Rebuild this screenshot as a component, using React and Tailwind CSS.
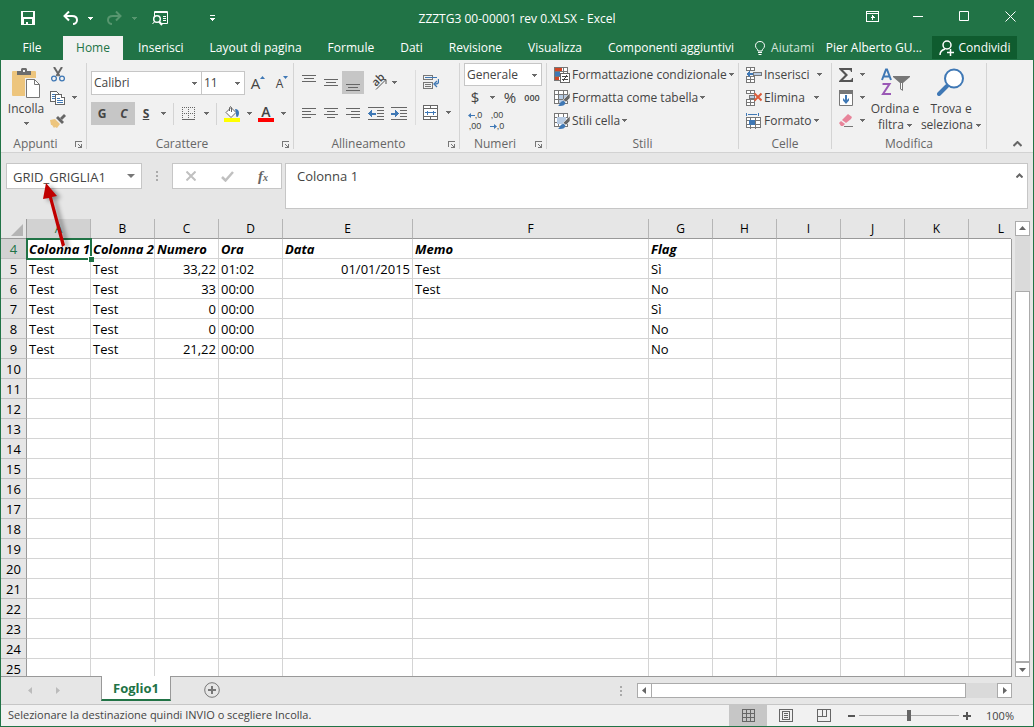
import React, { useState } from "react";

const columns = ["A", "B", "C", "D", "E", "F", "G", "H", "I", "J", "K", "L"];
const rowNumbers = Array.from({ length: 22 }, (_, i) => i + 4);
const rightAligned = ["C", "E"];

const sheet = {
    4: { A: "Colonna 1", B: "Colonna 2", C: "Numero", D: "Ora", E: "Data", F: "Memo", G: "Flag" },
    5: { A: "Test", B: "Test", C: "33,22", D: "01:02", E: "01/01/2015", F: "Test", G: "Sì" },
    6: { A: "Test", B: "Test", C: "33", D: "00:00", F: "Test", G: "No" },
    7: { A: "Test", B: "Test", C: "0", D: "00:00", G: "Sì" },
    8: { A: "Test", B: "Test", C: "0", D: "00:00", G: "No" },
    9: { A: "Test", B: "Test", C: "21,22", D: "00:00", G: "No" },
};

const tabs = ["Inserisci", "Layout di pagina", "Formule", "Dati", "Revisione", "Visualizza", "Componenti aggiuntivi"];

const Caret = ({ className = "" }) => (
    <svg className={"shrink-0 " + className} width="5" height="3" viewBox="0 0 5 3" fill="currentColor" shapeRendering="crispEdges">
        <path d="M0 0h5v1H4v1H3v1H2V2H1V1H0z" />
    </svg>
);

const CaretButton = ({ label, className = "" }) => (
    <button type="button" aria-label={label} className={"flex h-[23px] w-3 shrink-0 items-center justify-center text-[#6a6a6a] " + className}>
        <Caret />
    </button>
);

const Tool = ({ label, className = "w-[22px]", children }) => (
    <button type="button" aria-label={label} title={label} className={"flex h-[23px] shrink-0 items-center justify-center " + className}>
        {children}
    </button>
);

const Group = ({ label, launcher, className = "", children }) => (
    <section aria-label={label} className={"relative flex h-[86px] shrink-0 flex-col border-r border-[#d4d4d4] " + className}>
        <div className="flex h-[73px] shrink-0">{children}</div>
        <div className={"h-[13px] shrink-0 text-center leading-4 text-[#666] " + (launcher ? "pr-4" : "")}>{label}</div>
        {launcher && (
            <button type="button" aria-label={"Opzioni " + label} className="absolute right-[4px] bottom-[1px] text-[#777]">
                <svg width="7" height="7" viewBox="0 0 7 7" fill="none" stroke="currentColor" shapeRendering="crispEdges">
                    <path d="M0.500 6V0.500H6.500M3 3l3 3M6.500 3v3.500H3" />
                </svg>
            </button>
        )}
    </section>
);

const Lines = ({ d, blue, w = 16 }) => (
    <svg width={w} height="16" viewBox={"0 0 " + w + " 16"} fill="none" stroke="#666" shapeRendering="crispEdges">
        <path d={d} />
        {blue && <path d={blue} fill="#3f78b5" stroke="none" />}
    </svg>
);

const Select = ({ label, value, className }) => (
    <div className={"relative shrink-0 border border-[#c6c6c6] bg-white " + className}>
        <select aria-label={label} defaultValue={value} className="block h-full w-full appearance-none bg-transparent px-[2px] text-[#444] outline-none">
            <option>{value}</option>
        </select>
        <Caret className="pointer-events-none absolute top-[10px] right-1 text-[#6a6a6a]" />
    </div>
);

const PasteIcon = () => (
    <svg width="28" height="30" viewBox="0 0 28 30">
        <rect x="0" y="3" width="24" height="25" rx="1" fill="#edc57d" />
        <path d="M5 7V3h4V1l1-1h4l1 1v2h4v4z" fill="#6d6d6d" />
        <rect x="11" y="2" width="2" height="2" fill="#f1f1f1" />
        <path d="M13 10h11v18H13z" fill="#f1f1f1" />
        <path d="M14.500 11.500h8l5 5v13h-13z" fill="#fff" stroke="#777" />
        <path d="M22.500 11.500v5h5" fill="none" stroke="#777" />
    </svg>
);

const CutIcon = () => (
    <svg width="14" height="15" viewBox="0 0 14 15" fill="none">
        <path d="M3 0l5.500 9M11 0L5.500 9" stroke="#666" strokeWidth="2" />
        <circle cx="3" cy="11.500" r="2.400" stroke="#3f78b5" strokeWidth="1.300" />
        <circle cx="11" cy="11.500" r="2.400" stroke="#3f78b5" strokeWidth="1.300" />
    </svg>
);

const CopyIcon = () => (
    <svg width="16" height="14" viewBox="0 0 16 14" fill="#fff" stroke="#666" shapeRendering="crispEdges">
        <path d="M0.500 0.500h6l2 2v8h-8z" />
        <path d="M2 3.500h3M2 5.500h3M2 7.500h3" stroke="#3f78b5" />
        <path d="M5.500 3.500h6l3 3v7h-9z" />
        <path d="M11.500 3.500v3h3" />
        <path d="M7 7.500h3M7 9.500h6M7 11.500h6" stroke="#3f78b5" />
    </svg>
);

const BrushIcon = () => (
    <svg width="16" height="14" viewBox="0 0 16 14">
        <path d="M0 6l5-1 5 5-3 4-2-1-1 1-2-3-1 0z" fill="#edc57d" />
        <path d="M6 4l2-2 6 6-2 2z" fill="#666" />
        <path d="M10 4l4-4 2 2-4 4z" fill="#666" />
    </svg>
);

const BordersIcon = () => (
    <svg width="14" height="14" viewBox="0 0 14 14" stroke="#666" shapeRendering="crispEdges">
        <path d="M0 0.500h13M0 6.500h13M0.500 0v13M6.500 0v13M12.500 0v13" strokeDasharray="1 1" />
        <path d="M0 12.500h13" />
    </svg>
);

const FillIcon = () => (
    <svg width="16" height="16" viewBox="0 0 16 16">
        <path d="M2 6.500l5-5 5 5-5 5z" fill="#fff" stroke="#666" />
        <path d="M5.500 5V1.500q1-2 2 0V6" fill="none" stroke="#666" />
        <path d="M11 3c3 0 4 2 4 4s-1 4-2 4-1-2-1-4z" fill="#3f78b5" />
        <rect x="0" y="12" width="16" height="4" fill="#ff0" />
    </svg>
);

const StyleRowIcon = ({ kind }) => (
    <svg width="16" height="16" viewBox="0 0 16 16" shapeRendering="crispEdges">
        <path d="M0.500 0.500h13v13h-13zM0.500 4.500h13M0.500 9.500h13M4.500 0.500v13M9.500 0.500v13" fill="#fff" stroke="#777" />
        {kind === "cond" && (
            <>
                <path d="M1 1h7v3H1zM1 10h4v3H1z" fill="#d24726" />
                <path d="M1 5h5v4H1z" fill="#3f78b5" />
                <path d="M6.500 6.500h9v9h-9z" fill="#fff" stroke="#666" />
                <path d="M8 9.500h6M8 12.500h6M12.500 8l-3 6" stroke="#444" />
            </>
        )}
        {kind === "table" && <path d="M5 5h4v4H5zM10 5h3v4h-3zM5 10h4v3H5z" fill="#b7cbe3" />}
        {kind === "cell" && <path d="M3 4h9v7H3z" fill="#b7cbe3" />}
        {kind !== "cond" && (
            <g shapeRendering="auto">
                <path d="M16 3v5l-4 4-3-2z" fill="#666" stroke="#f1f1f1" strokeWidth="0.600" />
                <path d="M4 16c2-1 2-5 5-5 2 0 3 2 2 3-1 2-4 2-7 2z" fill="#3f78b5" />
            </g>
        )}
    </svg>
);

const CellIcon = ({ kind }) => (
    <svg width="16" height="16" viewBox="0 0 16 16" fill="none" stroke="#777" shapeRendering="crispEdges">
        {kind === "format" ? (
            <>
                <path d="M0.500 4.500h14v10h-14zM0.500 7.500h14M0.500 11.500h14M4.500 4.500v11M9.500 4.500v11" fill="#fff" />
                <path d="M3 7h6v5H3z" fill="#3f78b5" stroke="none" />
                <path d="M0.500 0v3M12.500 0v3M2 1.500h9" stroke="#3f78b5" />
            </>
        ) : (
            <path d="M0.500 0.500h8v3h-8zM4.500 0.500v3M0.500 9.500h8v6h-8zM4.500 9.500v6M0.500 12.500h8" fill="#fff" />
        )}
        {kind === "insert" && (
            <>
                <path d="M7.500 5.500h8v3h-8z" fill="#b7cbe3" />
                <path d="M0 7l4-3v2h3v2H4v2z" fill="#3f78b5" stroke="none" />
            </>
        )}
        {kind === "delete" && (
            <>
                <path d="M3.500 5.500h5v3h-5z" fill="#b7cbe3" />
                <path d="M8.500 3.500l7 7M15.500 3.500l-7 7" stroke="#dc5c3a" strokeWidth="2" shapeRendering="auto" />
            </>
        )}
    </svg>
);

const SigmaIcon = () => (
    <svg width="16" height="16" viewBox="0 0 16 16">
        <path d="M1 1h13v4h-1q0-2-2-2H5l5 5-5 5h7q2 0 2-2h1v4H1v-1l6-6-6-6z" fill="#555" />
    </svg>
);

const FillDownIcon = () => (
    <svg width="14" height="16" viewBox="0 0 14 16">
        <path d="M0.500 1.500h13v14h-13z" fill="#fff" stroke="#777" />
        <path d="M0 0h14v4H0z" fill="#777" />
        <path d="M6 5h2v5l2-2v2.500l-3 3.500-3-3.500V8l2 2z" fill="#3f78b5" />
    </svg>
);

const EraserIcon = () => (
    <svg width="14" height="14" viewBox="0 0 14 14">
        <path d="M9 0l4 3-1 2-5 4-4-3z" fill="#e8849a" />
        <path d="M2 7l4 3-2 2H2L0 9z" fill="#e8849a" />
        <path d="M5 12.500h9" stroke="#777" />
    </svg>
);

const SortIcon = () => (
    <svg width="29" height="28" viewBox="0 0 29 28" fill="none">
        <path d="M1 12L5 1.500h1L10 12M2.500 8.500h6" stroke="#3f78b5" strokeWidth="2" />
        <path d="M1.500 16h7L2 26h8" stroke="#9b59b6" strokeWidth="2" />
        <path d="M12 8h17v1l-7 6v8l-3-2v-6l-7-6z" fill="#777" />
        <path d="M20.500 15v6" stroke="#fff" />
    </svg>
);

const FindIcon = () => (
    <svg width="28" height="28" viewBox="0 0 28 28" fill="none" stroke="#3f78b5">
        <path d="M2 26l8-8" strokeWidth="4" strokeLinecap="round" />
        <circle cx="17" cy="10.500" r="9" fill="#fff" strokeWidth="2" />
    </svg>
);

const TitleBar = () => (
    <header className="grid h-9 shrink-0 grid-cols-[1fr_auto_1fr] items-center text-white">
        <div className="flex pl-[7px]">
            <Tool label="Salva" className="w-10">
                <svg width="14" height="14" viewBox="0 0 14 14" fill="currentColor" shapeRendering="crispEdges">
                    <path fillRule="evenodd" d="M0 0h14v14H0zM2 1v5h10V1zM3 8v5h2v-2h2v2h4V8z" />
                </svg>
            </Tool>
            <Tool label="Annulla" className="ml-2 w-7">
                <svg width="15" height="14" viewBox="0 0 15 14" fill="none" stroke="currentColor" strokeWidth="2">
                    <path d="M6 0.500L1.500 5 6 9.500M2 5h7c3 0 5 1.500 5 4s-2 4-4 4" />
                </svg>
            </Tool>
            <CaretButton label="Elenco annulla" className="text-white" />
            <Tool label="Ripeti" className="ml-1 w-7 text-[#57966f]">
                <svg width="15" height="14" viewBox="0 0 15 14" fill="none" stroke="currentColor" strokeWidth="2">
                    <path d="M9 0.500L13.500 5 9 9.500M13 5H6c-3 0-5 1.500-5 4s2 4 4 4" />
                </svg>
            </Tool>
            <CaretButton label="Elenco ripeti" className="text-[#57966f]" />
            <Tool label="Anteprima di stampa" className="ml-1 w-8">
                <svg width="16" height="15" viewBox="0 0 16 15" fill="none" stroke="currentColor">
                    <path d="M2.500 5V0.500h13v12H10M2 1.500h14M11 5.500h3M11 7.500h3M11 9.500h3" />
                    <circle cx="5" cy="8" r="3.300" strokeWidth="1.500" />
                    <path d="M7 10.500l3 3.500" strokeWidth="2" />
                    <path d="M3 10l-2.500 3" />
                </svg>
            </Tool>
            <Tool label="Personalizza barra di accesso rapido" className="ml-6 w-6">
                <svg width="5" height="6" viewBox="0 0 5 6" fill="currentColor" shapeRendering="crispEdges">
                    <path d="M0 0h5v1H0zM0 3h5v1H4v1H3v1H2V5H1V4H0z" />
                </svg>
            </Tool>
        </div>
        <h1 className="pt-[2px]">ZZZTG3 00-00001 rev 0.XLSX - Excel</h1>
        <div className="flex justify-end pb-1">
            <Tool label="Opzioni barra multifunzione" className="w-[46px]">
                <svg width="13" height="11" viewBox="0 0 13 11" fill="none" stroke="currentColor" shapeRendering="crispEdges">
                    <path d="M0.500 0.500h12v10h-12zM0 2.500h13M6.500 4v5M4.500 6.500h4M5.500 5.500h2" />
                </svg>
            </Tool>
            <Tool label="Riduci a icona" className="w-[46px]">
                <svg width="10" height="1" viewBox="0 0 10 1"><path d="M0 0h10v1H0z" fill="currentColor" /></svg>
            </Tool>
            <Tool label="Ingrandisci" className="w-[46px]">
                <svg width="10" height="10" viewBox="0 0 10 10"><path d="M0.500 0.500h9v9h-9z" fill="none" stroke="currentColor" /></svg>
            </Tool>
            <Tool label="Chiudi" className="w-[46px]">
                <svg width="11" height="11" viewBox="0 0 11 11"><path d="M0.500 0.500l10 10M10.500 0.500l-10 10" stroke="currentColor" /></svg>
            </Tool>
        </div>
    </header>
);

const TabBar = () => (
    <nav aria-label="Schede" className="flex h-6 shrink-0 items-stretch whitespace-nowrap text-white">
        <button type="button" className="w-[62px]">File</button>
        <button type="button" className="w-[60px] bg-[#f1f1f1] text-[#217346]">Home</button>
        <div className="flex pl-[2px]">
            {tabs.map((tab) => (
                <button key={tab} type="button" className="px-[13px]">{tab}</button>
            ))}
        </div>
        <button type="button" className="ml-2 flex items-center gap-[6px] text-[#d3e3da]">
            <svg width="10" height="14" viewBox="0 0 10 14" fill="none" stroke="#fff">
                <path d="M3 10c0-2-2.500-2.500-2.500-5.200C0.500 2 2.500 0.500 5 0.500s4.500 1.500 4.500 4.300C9.500 7.500 7 8 7 10zM3 11.500h4M3.500 13.500h3" />
            </svg>
            Aiutami
        </button>
        <button type="button" className="ml-auto pr-[10px]">Pier Alberto GU...</button>
        <button type="button" className="mr-4 mb-px flex w-[85px] items-center justify-center gap-1 bg-[#0f5c2f]">
            <svg width="16" height="16" viewBox="0 0 16 16" fill="none" stroke="currentColor" strokeWidth="1.500">
                <circle cx="8" cy="5" r="4" />
                <path d="M1 15c0-3 2-5 5-6M8 12.500h7M11.500 9v7" />
            </svg>
            Condividi
        </button>
    </nav>
);

const Ribbon = () => (
    <div className="flex h-[93px] shrink-0 border-b border-[#d2d2d2] bg-[#f1f1f1] pt-[3px] whitespace-nowrap text-[#444]">
        <Group label="Appunti" launcher className="w-[86px]">
            <button type="button" className="flex w-[49px] shrink-0 flex-col items-center pt-[5px] pl-px leading-4">
                <PasteIcon />
                <span className="pt-[3px]">Incolla</span>
                <Caret className="mt-[5px] text-[#6a6a6a]" />
            </button>
            <div className="flex flex-col">
                <Tool label="Taglia" className="w-4"><CutIcon /></Tool>
                <div className="flex">
                    <Tool label="Copia" className="w-4"><CopyIcon /></Tool>
                    <CaretButton label="Opzioni copia" className="ml-[2px]" />
                </div>
                <Tool label="Copia formato" className="w-4"><BrushIcon /></Tool>
            </div>
        </Group>

        <Group label="Carattere" launcher className="w-[207px]">
            <div className="flex flex-col gap-[7px] pt-2 pl-1">
                <div className="flex items-center">
                    <Select label="Tipo di carattere" value="Calibri" className="h-6 w-[111px]" />
                    <Select label="Dimensione carattere" value="11" className="-ml-px h-6 w-[44px]" />
                    <Tool label="Aumenta dimensione" className="w-[26px]">
                        <span className="text-[15px] leading-none">A</span>
                        <svg className="mb-3" width="5" height="3" viewBox="0 0 5 3"><path d="M0 3L2.500 0 5 3z" fill="#3f78b5" /></svg>
                    </Tool>
                    <Tool label="Riduci dimensione" className="w-[22px]">
                        <span className="pt-[2px] text-[12px] leading-none">A</span>
                        <svg className="mb-3" width="5" height="3" viewBox="0 0 5 3"><path d="M0 0h5L2.500 3z" fill="#3f78b5" /></svg>
                    </Tool>
                </div>
                <div className="flex items-center">
                    <Tool label="Grassetto" className="w-[22px] bg-[#c6c6c6] font-bold">G</Tool>
                    <Tool label="Corsivo" className="w-[22px] bg-[#c6c6c6] font-bold italic">C</Tool>
                    <Tool label="Sottolineato" className="w-[22px] font-bold underline">S</Tool>
                    <CaretButton label="Opzioni sottolineato" />
                    <div className="ml-1 h-[22px] w-px bg-[#d4d4d4]" />
                    <Tool label="Bordi" className="ml-1 w-[22px]"><BordersIcon /></Tool>
                    <CaretButton label="Opzioni bordi" />
                    <div className="ml-1 h-[22px] w-px bg-[#d4d4d4]" />
                    <Tool label="Colore riempimento" className="ml-1 w-[22px]"><FillIcon /></Tool>
                    <CaretButton label="Opzioni riempimento" />
                    <Tool label="Colore carattere" className="w-[22px] flex-col">
                        <span className="text-[14px] leading-[12px] font-semibold">A</span>
                        <span className="h-1 w-4 bg-[#f00]" />
                    </Tool>
                    <CaretButton label="Opzioni colore carattere" />
                </div>
            </div>
        </Group>

        <Group label="Allineamento" launcher className="w-[166px]">
            <div className="mt-[7px] flex h-[55px] w-[122px] flex-col gap-2 border-r border-[#dcdcdc] pt-px pl-1">
                <div className="flex">
                    <Tool label="Allinea in alto"><Lines d="M1 0.500h14M3 3.500h10M1 6.500h14" /></Tool>
                    <Tool label="Allinea al centro"><Lines d="M1 4.500h14M3 7.500h10M1 10.500h14" /></Tool>
                    <Tool label="Allinea in basso" className="w-[22px] bg-[#c6c6c6]"><Lines d="M1 9.500h14M3 12.500h10M1 15.500h14" /></Tool>
                    <Tool label="Orientamento" className="w-6">
                        <svg width="24" height="23" viewBox="0 0 24 23" fill="none" stroke="#555">
                            <text x="12" y="16" transform="rotate(-45 12 16)" fill="#444" stroke="none" fontSize="11" fontWeight="600">ab</text>
                            <path d="M12 18.500L21.500 9M17.500 8.500h4.500v4.500" />
                        </svg>
                    </Tool>
                    <CaretButton label="Opzioni orientamento" />
                </div>
                <div className="flex">
                    <Tool label="Allinea a sinistra"><Lines d="M1 2.500h14M1 5.500h9M1 8.500h14M1 11.500h9" /></Tool>
                    <Tool label="Centra"><Lines d="M1 2.500h14M4 5.500h8M1 8.500h14M4 11.500h8" /></Tool>
                    <Tool label="Allinea a destra"><Lines d="M1 2.500h14M6 5.500h9M1 8.500h14M6 11.500h9" /></Tool>
                    <Tool label="Riduci rientro" className="w-6">
                        <Lines d="M0 1.500h16M9 4.500h7M9 7.500h7M9 10.500h7M0 13.500h16" blue="M0 7.500l4-3.500v2.500h4v2H4V11z" />
                    </Tool>
                    <Tool label="Aumenta rientro" className="w-[22px]">
                        <Lines d="M0 1.500h16M9 4.500h7M9 7.500h7M9 10.500h7M0 13.500h16" blue="M8 7.500L4 4v2.500H0v2h4V11z" />
                    </Tool>
                </div>
            </div>
            <div className="flex flex-col gap-2 pt-[7px] pl-1">
                <Tool label="Testo a capo">
                    <svg width="16" height="16" viewBox="0 0 16 16" fill="none" stroke="#777" shapeRendering="crispEdges">
                        <path d="M0.500 1.500h9v4h-9zM0.500 8.500h9v6h-9zM2 10.500h6M2 12.500h6" />
                        <path d="M2 3.500h12" stroke="#3f78b5" />
                        <path d="M15.500 5v3q0 2-3 2M14 7l-3 3 3 3" stroke="#3f78b5" shapeRendering="auto" strokeWidth="1.300" />
                    </svg>
                </Tool>
                <div className="flex">
                    <Tool label="Unisci e centra">
                        <svg width="16" height="15" viewBox="0 0 16 15" fill="#fff" stroke="#666" shapeRendering="crispEdges">
                            <path d="M0.500 0.500h14v14h-14zM0.500 3.500h14M0.500 11.500h14M7.500 0v3M7.500 12v3" />
                            <path d="M2 7.500h11M4.500 5.500v4M10.500 5.500v4" stroke="#3f78b5" />
                        </svg>
                    </Tool>
                    <CaretButton label="Opzioni unione" />
                </div>
            </div>
        </Group>

        <Group label="Numeri" launcher className="w-[87px]">
            <div className="flex flex-col pl-1">
                <Select label="Formato numero" value="Generale" className="h-[23px] w-[78px]" />
                <div className="flex">
                    <Tool label="Valuta" className="w-[22px] text-[15px]">$</Tool>
                    <CaretButton label="Opzioni valuta" />
                    <Tool label="Percentuale" className="w-6 text-[15px]">%</Tool>
                    <Tool label="Stile separatore" className="w-5 text-[9px] font-semibold">000</Tool>
                </div>
                <div className="flex font-['Liberation_Sans',sans-serif] text-[9px] leading-[11px]">
                    <Tool label="Aumenta decimali" className="w-[22px] flex-col">
                        <span className="flex items-center">
                            <svg width="7" height="5" viewBox="0 0 7 5"><path d="M0 2.500L3 0v2h4v1H3v2z" fill="#3f78b5" /></svg>,0
                        </span>
                        <span>,00</span>
                    </Tool>
                    <Tool label="Diminuisci decimali" className="w-[22px] flex-col">
                        <span>,00</span>
                        <span className="flex items-center">
                            <svg width="7" height="5" viewBox="0 0 7 5"><path d="M7 2.500L4 0v2H0v1h4v2z" fill="#3f78b5" /></svg>,0
                        </span>
                    </Tool>
                </div>
            </div>
        </Group>

        <Group label="Stili" className="w-[192px]">
            <div className="flex flex-col items-start pl-[7px]">
                <button type="button" className="flex h-[23px] items-center gap-[2px]"><StyleRowIcon kind="cond" />Formattazione condizionale<Caret className="text-[#6a6a6a]" /></button>
                <button type="button" className="flex h-[23px] items-center gap-[2px]"><StyleRowIcon kind="table" />Formatta come tabella<Caret className="text-[#6a6a6a]" /></button>
                <button type="button" className="flex h-[23px] items-center gap-[2px]"><StyleRowIcon kind="cell" />Stili cella<Caret className="text-[#6a6a6a]" /></button>
            </div>
        </Group>

        <Group label="Celle" className="w-[93px]">
            <div className="flex flex-col items-start pl-[7px]">
                <div className="flex h-[23px]">
                    <button type="button" className="flex items-center gap-[2px]"><CellIcon kind="insert" />Inserisci</button>
                    <CaretButton label="Opzioni inserisci" className="ml-1" />
                </div>
                <div className="flex h-[23px]">
                    <button type="button" className="flex items-center gap-[2px]"><CellIcon kind="delete" />Elimina</button>
                    <CaretButton label="Opzioni elimina" className="ml-[6px]" />
                </div>
                <button type="button" className="flex h-[23px] items-center gap-[2px]"><CellIcon kind="format" />Formato<Caret className="text-[#6a6a6a]" /></button>
            </div>
        </Group>

        <Group label="Modifica" className="w-[155px]">
            <div className="flex w-9 shrink-0 flex-col pl-1">
                <div className="flex"><Tool label="Somma automatica" className="w-5"><SigmaIcon /></Tool><CaretButton label="Opzioni somma" /></div>
                <div className="flex"><Tool label="Riempimento" className="w-5"><FillDownIcon /></Tool><CaretButton label="Opzioni riempi" /></div>
                <div className="flex"><Tool label="Cancella" className="w-5"><EraserIcon /></Tool><CaretButton label="Opzioni cancella" /></div>
            </div>
            <button type="button" className="flex w-[54px] shrink-0 flex-col items-center gap-[5px] pt-[5px] leading-4">
                <SortIcon />
                <span>Ordina e<br />filtra <Caret className="inline text-[#6a6a6a]" /></span>
            </button>
            <button type="button" className="flex w-[58px] shrink-0 flex-col items-center gap-[5px] pt-[5px] leading-4">
                <FindIcon />
                <span>Trova e<br />seleziona <Caret className="inline text-[#6a6a6a]" /></span>
            </button>
        </Group>

        <button type="button" aria-label="Comprimi barra multifunzione" className="mt-auto mr-[10px] mb-1 ml-auto p-px">
            <svg width="9" height="6" viewBox="0 0 9 6" fill="none" stroke="#666" strokeWidth="2"><path d="M0.500 5l4-4 4 4" /></svg>
        </button>
    </div>
);

const FormulaBar = () => (
    <div className="flex h-[66px] shrink-0 items-start bg-[#e6e6e6] pt-[10px] pr-[5px] pl-[5px] text-[#444]">
        <div className="flex h-[26px] w-[136px] shrink-0 items-center border border-[#c6c6c6] bg-white">
            <input aria-label="Casella nome" defaultValue="GRID_GRIGLIA1" className="h-full w-0 flex-1 bg-transparent pt-px pl-[6px] text-[13px] outline-none" />
            <button type="button" aria-label="Elenco nomi" className="px-[6px]">
                <svg width="8" height="4" viewBox="0 0 8 4"><path d="M0 0h8L4 4z" fill="#777" /></svg>
            </button>
        </div>
        <div className="flex h-[26px] w-[30px] shrink-0 items-center justify-center">
            <svg width="2" height="10" viewBox="0 0 2 10" fill="#aaa"><path d="M0 0h2v2H0zM0 4h2v2H0zM0 8h2v2H0z" /></svg>
        </div>
        <div className="mr-[3px] flex h-[26px] w-[110px] shrink-0 items-center justify-between border border-[#c6c6c6] bg-white px-[7px]">
            <Tool label="Annulla modifica">
                <svg width="10" height="10" viewBox="0 0 10 10"><path d="M0.500 0.500l9 9M9.500 0.500l-9 9" stroke="#c0c0c0" strokeWidth="2" /></svg>
            </Tool>
            <Tool label="Invio">
                <svg width="13" height="11" viewBox="0 0 13 11" fill="none"><path d="M1 6l3.500 3.500L12 1" stroke="#c0c0c0" strokeWidth="2.500" /></svg>
            </Tool>
            <Tool label="Inserisci funzione" className="w-[22px] font-['Liberation_Serif',serif] leading-none font-bold text-[#666] italic">
                <span className="text-[15px]">f</span>
                <span className="pt-[3px] text-[10px]">x</span>
            </Tool>
        </div>
        <div className="flex h-[46px] flex-1 items-start border border-[#c6c6c6] bg-white">
            <textarea aria-label="Barra della formula" defaultValue="Colonna 1" className="h-full flex-1 resize-none overflow-hidden bg-transparent pt-[3px] pl-[11px] text-[13px] leading-[18px] outline-none" />
            <button type="button" aria-label="Comprimi barra della formula" className="p-1 pt-[9px]">
                <svg width="7" height="5" viewBox="0 0 7 5" fill="none" stroke="#666" strokeWidth="2"><path d="M0.500 4.500l3-3 3 3" /></svg>
            </button>
        </div>
    </div>
);

const Cell = ({ row, col, selected, onSelect }) => {
    const value = sheet[row]?.[col];
    const heading = row === 4;
    const align = rightAligned.includes(col) && !heading ? "text-right" : "text-left";
    return (
        <td
            onClick={onSelect}
            className={"relative h-5 border-b border-[#d4d4d4] p-0 " + (col === "L" ? "" : "border-r ") + (heading ? "font-bold italic" : "")}
        >
            <div className={"h-[19px] overflow-hidden px-[2px] leading-5 whitespace-nowrap " + align}>{value}</div>
            {selected && (
                <div className="pointer-events-none absolute -top-px -right-[2px] -bottom-[2px] -left-px z-10 border-2 border-[#217346]">
                    <div className="absolute -right-[4px] -bottom-[4px] h-[6px] w-[6px] border-t border-l border-white bg-[#217346]" />
                </div>
            )}
        </td>
    );
};

const Grid = () => {
    const [active, setActive] = useState("A4");
    return (
        <div className="flex-1 overflow-hidden border-b border-[#999]">
            <table className="w-full table-fixed border-separate border-spacing-0 text-[13px] text-black">
                <colgroup>
                    <col className="w-[26px]" />
                    <col className="w-[64px]" />
                    <col className="w-[64px]" />
                    <col className="w-[64px]" />
                    <col className="w-[64px]" />
                    <col className="w-[130px]" />
                    <col className="w-[236px]" />
                    <col className="w-[64px]" />
                    <col className="w-[64px]" />
                    <col className="w-[64px]" />
                    <col className="w-[64px]" />
                    <col className="w-[64px]" />
                    <col />
                </colgroup>
                <thead>
                    <tr className="bg-[#e6e6e6] text-[12px]">
                        <th aria-label="Seleziona tutto" className="h-5 border-r border-b border-[#999] p-0">
                            <svg className="mt-[2px] mr-[3px] ml-auto" width="12" height="12" viewBox="0 0 12 12"><path d="M12 0v12H0z" fill="#b4b4b4" /></svg>
                        </th>
                        {columns.map((col) => (
                            <th
                                key={col}
                                scope="col"
                                className={
                                    "h-5 border-b border-b-[#999] p-0 leading-[19px] font-normal " +
                                    (col === "L" ? "pl-[22px] " : "border-r border-r-[#b5b5b5] ") +
                                    (active[0] === col ? "bg-[#d2d2d2] text-[#217346]" : "")
                                }
                            >
                                {col}
                            </th>
                        ))}
                    </tr>
                </thead>
                <tbody className="bg-white">
                    {rowNumbers.map((row) => (
                        <tr key={row}>
                            <th
                                scope="row"
                                className={
                                    "h-5 border-r border-b border-r-[#999] border-b-[#c0c0c0] p-0 pt-px leading-[18px] font-normal " +
                                    (active.slice(1) === String(row) ? "bg-[#d2d2d2] text-[#217346]" : "bg-[#e6e6e6]")
                                }
                            >
                                {row}
                            </th>
                            {columns.map((col) => (
                                <Cell key={col} row={row} col={col} selected={active === col + row} onSelect={() => setActive(col + row)} />
                            ))}
                        </tr>
                    ))}
                </tbody>
            </table>
        </div>
    );
};

const ScrollButton = ({ label, d }) => (
    <button type="button" aria-label={label} className="flex h-[15px] w-[15px] shrink-0 items-center justify-center border border-[#ababab] bg-white">
        <svg width="7" height="7" viewBox="0 0 7 7" fill="#666"><path d={d} /></svg>
    </button>
);

const SheetBar = () => (
    <div className="flex h-[27px] shrink-0 bg-[#e6e6e6]">
        <div className="flex w-[100px] items-center gap-[24px] pb-px pl-[27px]">
            <button type="button" aria-label="Foglio precedente">
                <svg width="4" height="7" viewBox="0 0 4 7"><path d="M4 0v7L0 3.500z" fill="#bbb" /></svg>
            </button>
            <button type="button" aria-label="Foglio successivo">
                <svg width="4" height="7" viewBox="0 0 4 7"><path d="M0 0v7l4-3.500z" fill="#bbb" /></svg>
            </button>
        </div>
        <button type="button" className="relative -mt-px h-[25px] w-[70px] border-x border-b-2 border-x-[#999] border-b-[#217346] bg-white pt-[3px] text-[13px] font-bold text-[#217346]">
            Foglio1
        </button>
        <button type="button" aria-label="Nuovo foglio" className="ml-[33px] pb-px">
            <svg width="16" height="16" viewBox="0 0 16 16" fill="none" stroke="#777">
                <circle cx="8" cy="8" r="7.300" />
                <path d="M8 4v8M4 8h8" strokeWidth="2" />
            </svg>
        </button>
        <div className="ml-auto flex w-[393px] items-center pr-px">
            <svg className="mr-[15px] shrink-0" width="2" height="10" viewBox="0 0 2 10" fill="#aaa"><path d="M0 0h2v2H0zM0 4h2v2H0zM0 8h2v2H0z" /></svg>
            <ScrollButton label="Scorri a sinistra" d="M5 0v7L1 3.500z" />
            <div className="flex h-[15px] flex-1 bg-[#dadada]">
                <div className="w-[91%] border border-l-0 border-[#ababab] bg-white" />
            </div>
            <ScrollButton label="Scorri a destra" d="M2 0v7l4-3.500z" />
        </div>
        <div className="w-[20px]" />
    </div>
);

const StatusBar = () => (
    <footer className="flex h-[22px] shrink-0 items-stretch border-t border-[#c6c6c6] bg-[#f1f1f1] text-[11px] text-[#444]">
        <p className="mr-auto pl-[7px] leading-5">Selezionare la destinazione quindi INVIO o scegliere Incolla.</p>
        <Tool label="Normale" className="max-h-full w-[38px] bg-[#c6c6c6]">
            <svg width="13" height="13" viewBox="0 0 13 13" fill="none" stroke="#666" shapeRendering="crispEdges"><path d="M0.500 0.500h12v12h-12zM0 4.500h13M0 8.500h13M4.500 0v13M8.500 0v13" /></svg>
        </Tool>
        <Tool label="Layout di pagina" className="max-h-full w-[38px]">
            <svg width="14" height="13" viewBox="0 0 14 13" fill="none" stroke="#666" shapeRendering="crispEdges"><path d="M0.500 0.500h13v12h-13zM3.500 2.500h7v8h-7zM5 4.500h4M5 6.500h4M5 8.500h4" /></svg>
        </Tool>
        <Tool label="Anteprima interruzioni" className="max-h-full w-[38px]">
            <svg width="14" height="13" viewBox="0 0 14 13" fill="none" stroke="#666" shapeRendering="crispEdges"><path d="M0.500 0.500h13v12h-13zM5.500 0v7M9.500 0v7M0 7.500h10" /></svg>
        </Tool>
        <Tool label="Zoom indietro" className="max-h-full w-4">
            <svg width="7" height="2" viewBox="0 0 7 2"><path d="M0 0h7v2H0z" fill="#555" /></svg>
        </Tool>
        <input
            type="range"
            aria-label="Zoom"
            min="10"
            max="190"
            defaultValue="100"
            className="my-auto h-[12px] w-[100px] appearance-none bg-[linear-gradient(#aaa,#aaa)] bg-[length:100%_1px] bg-center bg-no-repeat [&::-webkit-slider-thumb]:h-[11px] [&::-webkit-slider-thumb]:w-1 [&::-webkit-slider-thumb]:appearance-none [&::-webkit-slider-thumb]:bg-[#666]"
        />
        <Tool label="Zoom avanti" className="max-h-full w-4">
            <svg width="8" height="8" viewBox="0 0 8 8"><path d="M3 0h2v3h3v2H5v3H3V5H0V3h3z" fill="#555" /></svg>
        </Tool>
        <button type="button" className="w-[58px] pr-[8px] text-center leading-5">100%</button>
    </footer>
);

const App = () => (
    <div className="relative flex h-screen flex-col overflow-hidden border border-t-0 border-[#217346] bg-[#217346] font-['Open_Sans','Noto_Sans',sans-serif] text-[12px]">
        <TitleBar />
        <TabBar />
        <Ribbon />
        <FormulaBar />
        <div className="flex min-h-0 flex-1 bg-[#e6e6e6]">
            <Grid />
            <div className="w-px shrink-0 pt-5"><div className="h-full w-px bg-[#999]" /></div>
            <div className="mr-[3px] ml-[3px] flex w-[15px] shrink-0 flex-col pt-[2px]">
                <ScrollButton label="Scorri in alto" d="M0 5h7L3.500 1z" />
                <div className="flex flex-1 flex-col justify-end bg-[#dadada]">
                    <div className="h-[87%] border border-[#ababab] bg-white" />
                </div>
                <ScrollButton label="Scorri in basso" d="M0 2h7L3.500 6z" />
            </div>
        </div>
        <SheetBar />
        <StatusBar />
        {/* callout arrow from the header cell to the name box */}
        <svg className="pointer-events-none absolute top-[180px] left-[38px] z-20 drop-shadow-[4px_2px_2px_rgba(0,0,0,0.4)]" width="32" height="70" viewBox="0 0 32 70">
            <path d="M7 3l11 13-5 1 13 48-3 2L10 18l-6 1z" fill="#c00000" />
        </svg>
    </div>
);

export default App;
